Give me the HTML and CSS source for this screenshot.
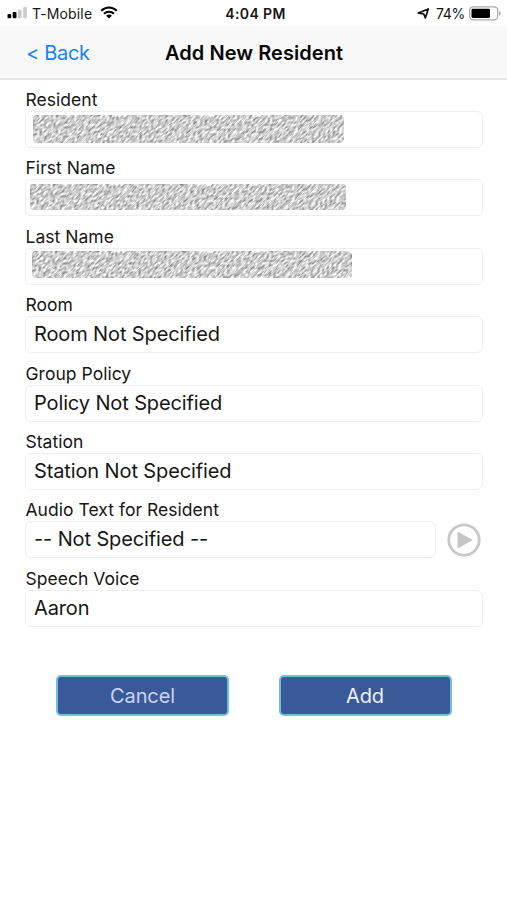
FILE: index.html
```
<!DOCTYPE html>
<html lang="en">
<head>
<meta charset="utf-8">
<title>Add New Resident</title>
<link rel="stylesheet" href="styles.css">
</head>
<body>
<header class="status">
  <div class="carrier">
    <svg class="signal" width="21" height="12" viewBox="0 0 21 12"><rect x="0.5" y="7" width="3.7" height="4.3" rx="1"/><rect x="5.7" y="5" width="3.8" height="6.3" rx="1"/><rect x="11" y="2.5" width="3.6" height="8.8" rx="1" fill="#c9c9c9"/><rect x="16.2" y="0" width="3.6" height="11.3" rx="1" fill="#c9c9c9"/></svg>
    <span class="carrier-name">T-Mobile</span>
    <svg class="wifi" width="18" height="13" viewBox="0 0 18 13"><g fill="none" stroke="#000" stroke-width="2.1"><path d="M1.2 4.8C5.7.3 12.3.3 16.8 4.8"/><path d="M4 7.8C6.9 5 11.1 5 14 7.8"/></g><path d="M9 12.5 6.1 9.7C7.7 8.2 10.3 8.2 11.9 9.7Z"/></svg>
  </div>
  <span class="clock">4:04 PM</span>
  <div class="power">
    <svg class="location" width="13" height="13" viewBox="0 0 13 13"><path d="M1.3 6.1 11.3 2 8.3 11 6.8 7Z" fill="none" stroke="#111" stroke-width="1.7" stroke-linejoin="round"/></svg>
    <span class="percent">74%</span>
    <svg class="battery" width="33" height="15" viewBox="0 0 33 15"><rect x=".7" y=".8" width="28" height="13" rx="3.5" fill="#fff" stroke="#aaa" stroke-width="1.3"/><rect x="2.5" y="2.7" width="18.5" height="9.2" rx="1.4"/><path d="M30.2 5.2C32 5.7 32 8.9 30.2 9.4Z" fill="#999"/></svg>
  </div>
</header>
<nav class="navbar">
  <a class="back">&lt; Back</a>
  <h1 class="title">Add New Resident</h1>
</nav>
<svg class="defs" width="0" height="0"><filter id="grain" x="0" y="0" width="1" height="1" color-interpolation-filters="sRGB"><feTurbulence type="fractalNoise" baseFrequency=".43" numOctaves="2" seed="4" result="n"/><feConvolveMatrix in="n" order="3" kernelMatrix="0 0 1 0 2 0 1 0 0" divisor="4" preserveAlpha="true"/><feColorMatrix values="1.25 0 0 0 .18  1.25 0 0 0 .18  1.25 0 0 0 .18  0 0 0 0 1"/><feComposite in2="SourceGraphic" operator="in"/></filter></svg>
<main class="form">
  <section class="group"><label class="label">Resident</label><div class="field"><svg class="mask m-resident" width="311" height="28"><rect width="311" height="28" rx="4" filter="url(#grain)"/></svg></div></section>
  <section class="group"><label class="label">First Name</label><div class="field"><svg class="mask m-first" width="316" height="26"><rect width="316" height="26" rx="3" filter="url(#grain)"/></svg></div></section>
  <section class="group"><label class="label">Last Name</label><div class="field"><svg class="mask m-last" width="320" height="27"><rect width="320" height="27" rx="4" filter="url(#grain)"/></svg></div></section>
  <section class="group"><label class="label">Room</label><div class="field"><span>Room Not Specified</span></div></section>
  <section class="group"><label class="label">Group Policy</label><div class="field"><span>Policy Not Specified</span></div></section>
  <section class="group"><label class="label">Station</label><div class="field"><span>Station Not Specified</span></div></section>
  <section class="group"><label class="label">Audio Text for Resident</label>
    <div class="row"><div class="field"><span>-- Not Specified --</span></div><svg class="play" width="34" height="34" viewBox="0 0 34 34"><circle cx="17" cy="17" r="15.2" fill="none" stroke="#c9c9c9" stroke-width="2.8"/><path d="M11 9.2 25 17 11 25Z" fill="#c6c6c6" stroke="#c6c6c6" stroke-linejoin="round"/></svg></div>
  </section>
  <section class="group"><label class="label">Speech Voice</label><div class="field"><span>Aaron</span></div></section>
</main>
<footer class="actions">
  <button class="button cancel">Cancel</button>
  <button class="button">Add</button>
</footer>
</body>
</html>
```
FILE: styles.css
```
* { box-sizing: border-box; }
body { margin: 0; width: 507px; height: 900px; overflow: hidden; background: #fff; color: #161616; font-family: Inter, "Liberation Sans", sans-serif; }
svg { display: block; flex: none; }
.defs { position: absolute; }
.status { display: grid; grid-template-columns: 1fr auto 1fr; align-items: center; height: 26px; padding: 1px 5px 1px 7px; font-size: 14px; white-space: nowrap; }
.carrier, .power { display: flex; align-items: center; }
.carrier-name { margin-left: 4px; width: 61px; letter-spacing: .15px; }
.wifi { margin: -1px 0 0 7px; }
.clock { margin-left: 2px; font-size: 14px; font-weight: 600; letter-spacing: .4px; }
.power { justify-content: flex-end; }
.percent { margin: 0 4px 0 6px; letter-spacing: -.3px; }
.navbar { display: grid; grid-template-columns: 165px auto 1fr; align-items: center; height: 54px; padding: 1px 0 0; background: #f8f8f8; border-bottom: 2px solid #e6e6e6; white-space: nowrap; }
.back { padding-left: 26px; color: #1783fb; font-size: 20px; letter-spacing: -.3px; }
.title { margin: 0; color: #080808; font-size: 20px; font-weight: 600; letter-spacing: .05px; }
.form { padding: 9px 24.5px 0 25px; }
.group { height: 68.4px; }
.label { display: block; height: 22px; padding-left: .5px; line-height: 22px; font-size: 17.5px; letter-spacing: .03px; white-space: nowrap; }
.field { flex: 1; display: flex; align-items: center; height: 37px; padding: 0 8px 1px; border: 1.4px solid #eee; border-radius: 6px; font-size: 20px; letter-spacing: -.12px; white-space: nowrap; }
.row { display: flex; align-items: center; padding-right: 1px; }
.row .field { flex: none; width: 411px; }
.play { margin-left: 11px; }
.mask { margin-top: -1px; }
.m-resident { margin-left: -1.5px; }
.m-first { margin-left: -4px; }
.m-last { margin-top: -2px; margin-left: -2.5px; }
.actions { display: flex; gap: 49.5px; padding: 39px 0 0 56px; }
.button { width: 173px; height: 40.5px; padding: 1px 0 0; border: 2.5px solid #6fc0df; border-radius: 5px; background: #3a5999; color: #eef2ff; font: 20px Inter, "Liberation Sans", sans-serif; letter-spacing: -.1px; }
.cancel { color: #c9d5f5; }
```
